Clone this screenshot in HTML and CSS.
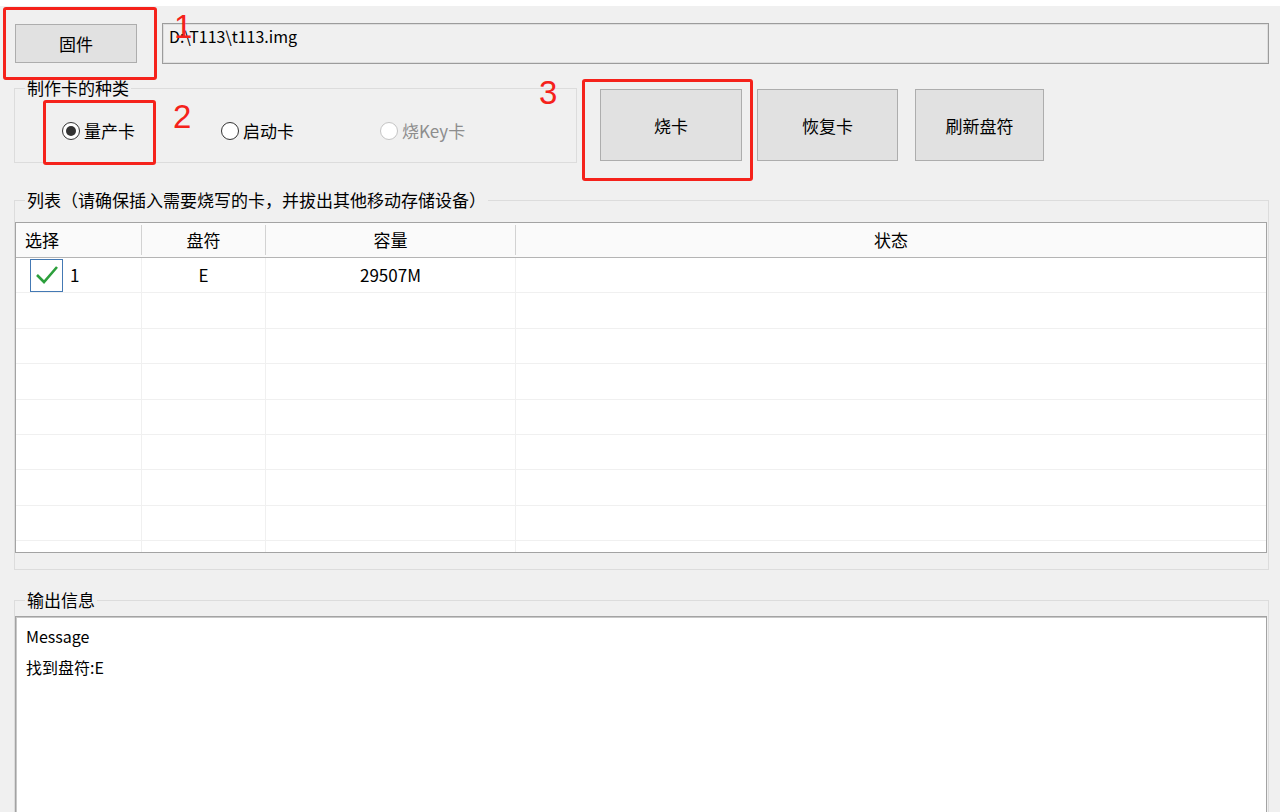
FILE: index.html
```html
<!DOCTYPE html>
<html lang="zh-CN">
<head>
    <meta charset="UTF-8">
    <meta name="viewport" content="width=device-width, initial-scale=1.0">
    <title>烧卡工具</title>
    <link rel="stylesheet" href="styles.css">
</head>
<body>
    <div class="window">
        <!-- 固件选择 -->
        <div class="toolbar">
            <button class="btn btn-firmware">固件</button>
            <div class="path-box">D:\T113\t113.img</div>
        </div>

        <!-- 卡类型 + 操作按钮 -->
        <div class="actions">
            <fieldset class="group card-type">
                <legend>制作卡的种类</legend>
                <div class="radios">
                    <label class="radio checked"><span class="dot"></span>量产卡</label>
                    <label class="radio"><span class="dot"></span>启动卡</label>
                    <label class="radio disabled"><span class="dot"></span>烧Key卡</label>
                </div>
            </fieldset>
            <div class="buttons">
                <button class="btn btn-big btn-burn">烧卡</button>
                <button class="btn btn-big btn-restore">恢复卡</button>
                <button class="btn btn-big btn-refresh">刷新盘符</button>
            </div>
        </div>

        <!-- 设备列表 -->
        <fieldset class="group list-group">
            <legend>列表（请确保插入需要烧写的卡，并拔出其他移动存储设备）</legend>
            <div class="table">
                <div class="thead">
                    <div class="th th-left">选择</div>
                    <div class="th">盘符</div>
                    <div class="th">容量</div>
                    <div class="th">状态</div>
                </div>
                <div class="tbody">
                    <div class="row">
                        <div class="td td-left">
                            <span class="check">
                                <svg width="28" height="28" viewBox="0 0 28 28">
                                    <polyline points="4,14 11,21 24,6" fill="none" stroke="#2c9f3c" stroke-width="2.6"/>
                                </svg>
                            </span>1
                        </div>
                        <div class="td">E</div>
                        <div class="td">29507M</div>
                        <div class="td"></div>
                    </div>
                    <div class="row"><div class="td"></div><div class="td"></div><div class="td"></div><div class="td"></div></div>
                    <div class="row"><div class="td"></div><div class="td"></div><div class="td"></div><div class="td"></div></div>
                    <div class="row"><div class="td"></div><div class="td"></div><div class="td"></div><div class="td"></div></div>
                    <div class="row"><div class="td"></div><div class="td"></div><div class="td"></div><div class="td"></div></div>
                    <div class="row"><div class="td"></div><div class="td"></div><div class="td"></div><div class="td"></div></div>
                    <div class="row"><div class="td"></div><div class="td"></div><div class="td"></div><div class="td"></div></div>
                    <div class="row"><div class="td"></div><div class="td"></div><div class="td"></div><div class="td"></div></div>
                    <div class="row"><div class="td"></div><div class="td"></div><div class="td"></div><div class="td"></div></div>
                </div>
            </div>
        </fieldset>

        <!-- 输出信息 -->
        <fieldset class="group output-group">
            <legend>输出信息</legend>
            <div class="log">
                <p>Message</p>
                <p>找到盘符:E</p>
            </div>
        </fieldset>

        <!-- 步骤标注 -->
        <div class="mark mark-1"></div>
        <div class="mark mark-2"></div>
        <div class="mark mark-3"></div>
        <span class="step step-1">1</span>
        <span class="step step-2">2</span>
        <span class="step step-3">3</span>
    </div>
</body>
</html>
```

FILE: styles.css
```css
/* 窗口基础样式 */
html, body {
    margin: 0;
    height: 812px;
    overflow: hidden;
}

body {
    background-color: #f0f0f0;
    font-family: "Noto Sans CJK SC", "Noto Sans", sans-serif;
    font-size: 17px;
    color: #000;
}

.window {
    position: relative;
    border-top: 6px solid #fff;
    padding: 0 11px 0 14px;
}

/* 按钮 */
.btn {
    font-family: inherit;
    font-size: 17px;
    color: #000;
    background-color: #e1e1e1;
    border: 1px solid #adadad;
    border-radius: 0;
    padding: 0;
    cursor: pointer;
}

/* 第一行：固件 + 路径 */
.toolbar {
    display: flex;
    margin-top: 17px;
    height: 41px;
}

.btn-firmware {
    width: 122px;
    height: 39px;
    margin: 1px 0 0 1px;
}

.path-box {
    flex: 1;
    margin-left: 25px;
    box-sizing: border-box;
    height: 41px;
    border: 1px solid #9c9c9c;
    box-shadow: inset 0 0 0 1px #dedede;
    padding: 1px 0 0 6px;
    line-height: 22px;
    font-size: 16px;
}

/* 分组框 */
.group {
    margin: 0;
    min-width: 0;
    border: 1px solid #dcdcdc;
    padding: 0 10px;
}

.group legend {
    padding: 0 2px;
    line-height: 18px;
    font-size: 17px;
}

.actions {
    display: flex;
    margin-top: 15px;
    align-items: flex-start;
}

.card-type {
    box-sizing: border-box;
    width: 563px;
    padding-top: 24px;
    padding-bottom: 21px;
}

.radios {
    display: flex;
    height: 20px;
    padding-left: 37px;
}

.radio {
    display: flex;
    align-items: center;
    width: 159px;
    line-height: 20px;
}

.radio .dot {
    box-sizing: border-box;
    width: 18px;
    height: 18px;
    border-radius: 50%;
    border: 1px solid #333;
    background: #fff;
    margin-right: 4px;
    position: relative;
}

.radio.checked .dot::after {
    content: "";
    position: absolute;
    left: 3px;
    top: 3px;
    width: 10px;
    height: 10px;
    border-radius: 50%;
    background: #333;
}

.radio.disabled {
    color: #8d8d8d;
}

.radio.disabled .dot {
    border-color: #c4c4c4;
}

.buttons {
    display: flex;
    margin: 10px 0 0 23px;
}

.btn-big {
    height: 72px;
}

.btn-burn { width: 142px; }
.btn-restore { width: 141px; margin-left: 15px; }
.btn-refresh { width: 129px; margin-left: 17px; }

/* 列表 */
.list-group {
    margin-top: 28px;
    padding: 13px 1px 16px 0;
}

.list-group legend {
    margin-left: 10px;
}

.table {
    height: 331px;
    box-sizing: border-box;
    border: 1px solid #a3a3a3;
    background: #fff;
    overflow: hidden;
}

.thead,
.row {
    display: grid;
    grid-template-columns: 126px 124px 250px 1fr;
}

.thead {
    height: 35px;
    box-sizing: border-box;
    border-bottom: 1px solid #b4b4b4;
    background: #fafafa;
}

.th {
    text-align: center;
    border-right: 1px solid #d2d2d2;
    margin: 2px 0;
    line-height: 30px;
}

.th:last-child {
    border-right: none;
}

.th-left {
    text-align: left;
    padding-left: 9px;
}

.row {
    height: 35.4px;
    box-sizing: border-box;
    border-bottom: 1px solid #f0f0f0;
}

.td {
    text-align: center;
    line-height: 34px;
    border-right: 1px solid #f0f0f0;
}

.td:last-child {
    border-right: none;
}

.td-left {
    display: flex;
    align-items: center;
    padding-left: 14px;
    text-align: left;
}

.check {
    box-sizing: border-box;
    width: 33px;
    height: 33px;
    border: 1.5px solid #4479b4;
    display: flex;
    align-items: center;
    justify-content: center;
    margin-right: 7px;
}

/* 输出信息 */
.output-group {
    margin-top: 21px;
    padding: 7px 1px 0 0;
}

.output-group legend {
    margin-left: 10px;
}

.log {
    height: 230px;
    background: #fff;
    border: 1px solid #a3a3a3;
    box-shadow: inset 1px 1px 0 #c8c8c8;
    padding: 4px 10px;
}

.log p {
    margin: 0;
    line-height: 31px;
    font-size: 16px;
}

/* 红色标注框和序号 */
.mark {
    position: absolute;
    box-sizing: border-box;
    border: 3px solid #f5221b;
    border-radius: 3px;
}

.mark-1 { left: 3px; top: 1px; width: 154px; height: 73px; }
.mark-2 { left: 43px; top: 94px; width: 113px; height: 65px; }
.mark-3 { left: 582px; top: 73px; width: 171px; height: 102px; }

.step {
    position: absolute;
    font-family: "Liberation Sans", sans-serif;
    font-size: 33px;
    line-height: 1;
    color: #f5221b;
}

.step-1 { left: 174px; top: 4px; }
.step-2 { left: 173px; top: 94px; }
.step-3 { left: 539px; top: 70px; }
```
